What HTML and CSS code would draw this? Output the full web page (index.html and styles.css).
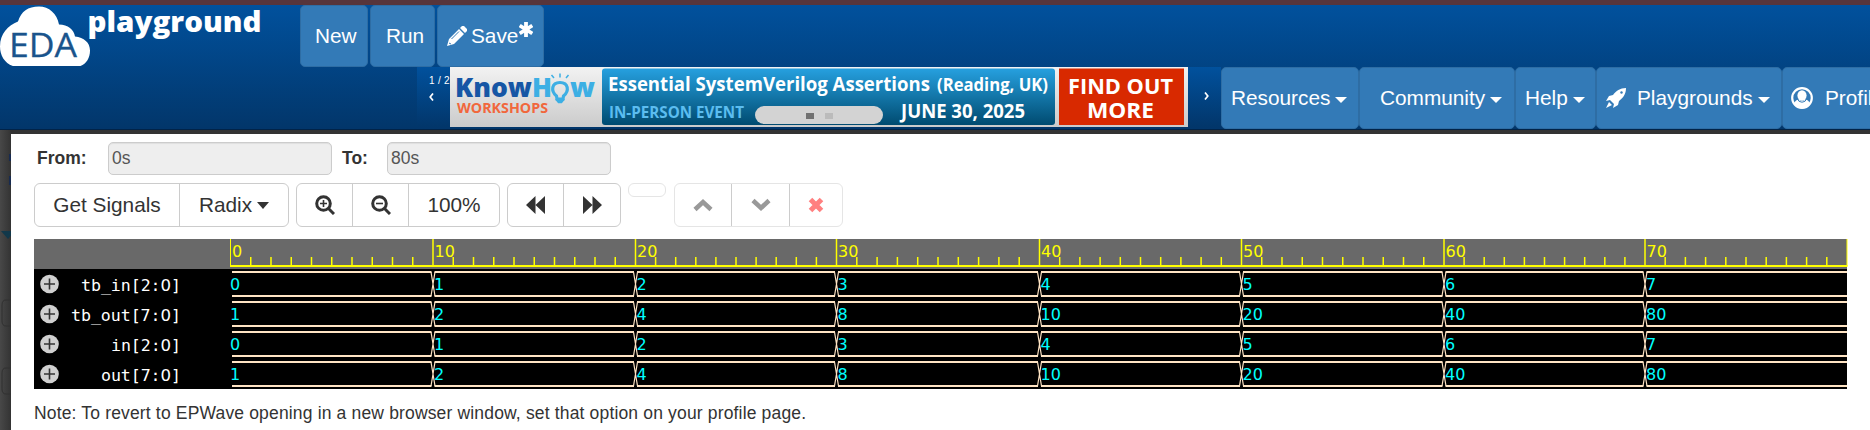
FILE: index.html
```html
<!DOCTYPE html>
<html lang="en">
<head>
<meta charset="utf-8">
<title>EDA Playground</title>
<link rel="stylesheet" href="styles.css">
</head>
<body>
<header class="topbar">
  <div class="primary">
    <svg class="logo" width="270" height="61" viewBox="0 5 270 61">
      <path d="M17 67.500C6 66 0 57 0 47c0-13 8-21 18-25C21 12 28 7 39 7c10 0 18 7 20 18 9 0 15 5 16 12 9 1 15 6 15 14 0 9-5 15-13 16.500z" transform="translate(0 -.500)" fill="#fff"/>
      <text class="logo-eda" x="9" y="57" textLength="68" lengthAdjust="spacingAndGlyphs">EDA</text>
      <text class="logo-name" x="87.500" y="31.500" textLength="174" lengthAdjust="spacingAndGlyphs">playground</text>
    </svg>
    <a class="nav new">New</a>
    <a class="nav run">Run</a>
    <a class="nav save"><svg width="20" height="20" viewBox="0 0 20 20"><path d="M0 20l2-7L12 3l5 5L7 18zM13 2l2-2q1-1 2 0l3 3q1 1 0 2l-2 2z" fill="#fff"/><path d="M4.500 13L12 5.500M2 17l2 1" stroke="#337ab7" fill="none"/></svg><span>Save</span><svg class="star" width="14" height="15" viewBox="0 0 14 15"><path d="M7 0v15M.7 3.500l12.600 8M.7 11.500l12.600-8" stroke="#fff" stroke-width="3.800"/></svg></a>
  </div>
  <div class="secondary">
    <div class="slider">
      <div class="prev"><span>1 / 2</span><svg width="5" height="8" viewBox="0 0 5 8"><path d="M4 .5L1.200 4 4 7.500" stroke="#fff" stroke-width="1.700" fill="none"/></svg></div>
      <svg class="banner" width="738" height="60" viewBox="450 67 738 60">
        <defs>
          <linearGradient id="paper" x2="0" y2="1"><stop stop-color="#f2f2f2"/><stop offset="1" stop-color="#cbcbcb"/></linearGradient>
          <linearGradient id="ocean" x2="0" y2="1"><stop stop-color="#26a0df"/><stop offset="1" stop-color="#004b70"/></linearGradient>
        </defs>
        <path d="M450 67h738v60H450z" fill="url(#paper)"/>
        <rect x="602" y="68.500" width="453" height="56.500" rx="3" fill="url(#ocean)"/>
        <path d="M1059 68.500h125V125h-125z" fill="#d82900"/>
        <text class="b-know" x="455" y="97" fill="#1656a5" textLength="77" lengthAdjust="spacingAndGlyphs">Know</text>
        <text class="b-know" x="532" y="97" fill="#3dafe4" textLength="20" lengthAdjust="spacingAndGlyphs">H</text>
        <text class="b-know" x="570" y="97" fill="#3dafe4" textLength="25" lengthAdjust="spacingAndGlyphs">w</text>
        <path d="M556.500 96c-6-5-5-13.500 3.500-13.500s9.500 8.500 3.500 13.500l-.500 3h-6z" fill="none" stroke="#3dafe4" stroke-width="3.200"/>
        <path d="M556.500 100h7l-2 2.500h-3zM560 73.500v4M551.500 75l2.500 3M568.500 75l-2.500 3" fill="#3dafe4" stroke="#3dafe4" stroke-width="1.500"/>
        <text class="b-work" x="457" y="113" textLength="91" lengthAdjust="spacingAndGlyphs">WORKSHOPS</text>
        <g class="b-text">
          <text x="608" y="91" font-size="20" textLength="322" lengthAdjust="spacingAndGlyphs">Essential SystemVerilog Assertions</text>
          <text x="937" y="91" font-size="17" textLength="111" lengthAdjust="spacingAndGlyphs">(Reading, UK)</text>
          <text class="b-person" x="609" y="117.500" font-size="16.500" textLength="135" lengthAdjust="spacingAndGlyphs">IN-PERSON EVENT</text>
          <text x="901" y="117.500" font-size="19" textLength="124" lengthAdjust="spacingAndGlyphs">JUNE 30, 2025</text>
          <text x="1068" y="93.500" font-size="21" textLength="105" lengthAdjust="spacingAndGlyphs">FIND OUT</text>
          <text x="1087" y="118" font-size="21" textLength="67" lengthAdjust="spacingAndGlyphs">MORE</text>
        </g>
        <rect x="755" y="106" width="128" height="18" rx="9" fill="#d3d3d3"/>
        <path d="M806 113h8v6h-8z" fill="#717171"/><path d="M825 113h8v6h-8z" fill="#bbb"/>
      </svg>
      <svg class="next" width="5" height="8" viewBox="0 0 5 8"><path d="M1 .5L3.800 4 1 7.500" stroke="#fff" stroke-width="1.700" fill="none"/></svg>
    </div>
    <a class="nav menu resources">Resources<i class="caret"></i></a>
    <a class="nav menu community">Community<i class="caret"></i></a>
    <a class="nav menu help">Help<i class="caret"></i></a>
    <a class="nav menu playgrounds"><svg width="20" height="20" viewBox="0 0 20 20"><path d="M20 0c-6 0-10 3-13 7L3 8l-3 5 4-1 4 4-1 4 5-3 1-4c4-3 7-7 7-13zM3 14l-3 6 6-3z" fill="#fff"/><circle cx="15.500" cy="4.500" r="1.200" fill="#337ab7"/></svg><span>Playgrounds</span><i class="caret"></i></a>
    <a class="nav menu profile"><svg width="22" height="22" viewBox="0 0 22 22"><circle cx="11" cy="11" r="9.800" fill="none" stroke="#fff" stroke-width="2.200"/><ellipse cx="11" cy="8.500" rx="4.600" ry="5.200" fill="#fff"/><path d="M3 17q1-4 4.500-4.500 3.500 3 7 0Q18 13 19 17q-3 4.500-8 4.500T3 17z" fill="#fff"/><path d="M6.500 12q1 3.200 4.500 3.200t4.500-3.200" fill="none" stroke="#337ab7" stroke-width="1"/></svg><span>Profile</span></a>
  </div>
</header>
<div class="stage">
  <svg class="backdrop" width="11" height="301" viewBox="0 129 11 301"><path d="M1 230h14l-7 8z" fill="#12384a"/><path d="M11 299H6q-4 0-4 5v16q0 5 4 5h5M11 367H6q-4 0-4 5v16q0 5 4 5h5" fill="none" stroke="#303030"/><path d="M10 153v7M10 175v9" stroke="#182b50" stroke-width="2"/></svg>
  <main class="modal">
    <div class="range"><label class="from">From:</label><div class="field">0s</div><label class="to">To:</label><div class="field">80s</div></div>
    <div class="tools">
      <div class="group"><button class="get">Get Signals</button><button class="radix">Radix<i class="caret"></i></button></div>
      <div class="group">
        <button class="zin"><svg width="20" height="20" viewBox="0 0 20 20"><circle cx="8.500" cy="8.500" r="6.800"/><path d="M13 13l6 6"/><path class="thin" d="M5 8.500h7M8.500 5v7"/></svg></button>
        <button class="zout"><svg width="20" height="20" viewBox="0 0 20 20"><circle cx="8.500" cy="8.500" r="6.800"/><path d="M13 13l6 6"/><path class="thin" d="M5 8.500h7"/></svg></button>
        <button class="full">100%</button>
      </div>
      <div class="group">
        <button class="back"><svg width="19" height="18" viewBox="0 0 19 18"><path class="solid" d="M0 9l9.500-9v9L19 0v18L9.500 9v9z"/></svg></button>
        <button class="fwd"><svg width="19" height="18" viewBox="0 0 19 18"><path class="solid" d="M19 9L9.500 0v9L0 0v18l9.500-9v9z"/></svg></button>
      </div>
      <div class="empty"></div>
      <div class="group faded">
        <button class="up"><svg width="20" height="14" viewBox="0 0 20 14"><path class="chev" d="M2 11.500L10 4l8 7.500"/></svg></button>
        <button class="down"><svg width="20" height="14" viewBox="0 0 20 14"><path class="chev" d="M2 2.500L10 10l8-7.500"/></svg></button>
        <button class="del"><svg width="16" height="16" viewBox="0 0 16 16"><path class="cross" d="M2.500 2.500l11 11M13.500 2.500l-11 11"/></svg></button>
      </div>
    </div>
    <svg class="waves" width="1814" height="150" viewBox="34 239 1814 150"></svg>
    <p class="note">Note: To revert to EPWave opening in a new browser window, set that option on your profile page.</p>
  </main>
</div>
<script src="waves.js"></script>
</body>
</html>
```
FILE: styles.css
```css
*{box-sizing:border-box}
body{margin:0;width:1870px;height:430px;overflow:hidden;font-family:"Liberation Sans",Arial,sans-serif;color:#333;background:#fff}
.topbar{height:130px;border-top:5px solid #57353b;border-bottom:1px solid #012348;background:linear-gradient(#01519d,#02366a)}
.primary,.secondary{display:flex;height:62px}
.logo{margin-right:30px;flex:none}
.logo-eda{font:33px "Open Sans",sans-serif;fill:#1a548c;stroke:#1a548c;stroke-width:.3px}
.logo-name{font:800 29px "Open Sans",sans-serif;fill:#fff}
.nav{display:flex;align-items:center;height:62px;flex:none;border:1px solid #2e6da4;border-radius:5px;background:#337ab7;color:#fff;font-size:20.800px;white-space:nowrap}
.new{width:68px;padding-left:14px;margin-right:2px}
.run{width:65px;padding-left:15px;margin-right:2px}
.save{width:107px;padding-left:9px}
.save span{margin-left:4px}
.star{margin:-13px 0 0 1px}
.secondary{padding-left:417px}
.slider{display:flex;width:804px;height:60px;flex:none;background:linear-gradient(#01519d,#02366a)}
.prev{display:flex;flex-direction:column;width:33px;padding:8px 0 0 12px;color:#fff;font-size:10px;letter-spacing:.3px;line-height:12px;white-space:nowrap}
.prev svg{margin-top:6px}
.banner{flex:none}
.b-know{font:800 26px "Open Sans",sans-serif}
.b-work{font:700 15px "Open Sans",sans-serif;fill:#f1673c}
.b-text{font-family:"Open Sans",sans-serif;font-weight:700;fill:#fff}
.b-person{fill:#5bbdf0}
.next{margin:25px 0 0 16px}
.caret{width:0;height:0;margin-left:5px;margin-top:3px;border:6px solid transparent;border-top-color:currentColor;border-bottom:0}
.menu{padding-left:9px}
.resources{width:138px}
.community{width:156px;padding-left:20px}
.help{width:81px}
.playgrounds{width:186px;padding-left:9px}
.playgrounds span{margin-left:11px}
.profile{width:120px;padding-left:8px}
.profile span{margin-left:12px}
.stage{display:flex;height:300px;background:linear-gradient(90deg,#484848,#333 11px)}
.backdrop{flex:none}
.modal{width:1859px;height:296px;margin-top:4px;padding:8px 0 0 23px;background:#fff}
.range{display:flex;height:33px;align-items:center;font-size:17.500px}
.range label{font-weight:bold}
.from{width:74px;padding-left:3px}
.to{width:55px;padding-left:10px}
.field{width:224px;height:33px;padding-left:3px;line-height:30px;border:1px solid #ccc;border-radius:5px;background:#eee;color:#555;box-shadow:inset 0 1px 1px #0001}
.tools{display:flex;align-items:flex-start;gap:7px;margin-top:8px;height:56px}
.group{display:flex;height:44px;border:1px solid #ccc;border-radius:6px}
.group button{display:flex;align-items:center;justify-content:center;padding:0;border:0;background:none;color:#333;font:20.800px "Liberation Sans",Arial,sans-serif}
.group button+button{border-left:1px solid #ccc}
.group svg{fill:none;stroke:#333;stroke-width:3}
.group .thin{stroke-width:1.600}
.group .solid{fill:#333;stroke:none}
.get{width:144px}.radix{width:109px}
.radix .caret{margin-top:0;border-width:7px 6.500px 0}
.zin{width:55px}.zout{width:56px}.full{width:91px}
.back{width:55px}.fwd{width:57px}
.empty{width:38px;height:14px;border:1px solid #e5e5e5;border-radius:6px}
.faded{margin-left:1px;border-color:#e5e5e5}
.up{width:56px}.down{width:58px}.del{width:53px}
.group .chev{stroke:#999;stroke-width:4.500}
.group .cross{stroke:#ff8080;stroke-width:5}
.waves{display:block}
.signal{font:16.600px "DejaVu Sans Mono",monospace;fill:#fff}
.zero{font-family:"DejaVu Sans",sans-serif}
.value{font:16px "DejaVu Sans",sans-serif;fill:#0ff}
.tick{font:16px "DejaVu Sans",sans-serif;fill:#ff0}
.note{margin:14px 0 0;font-size:17.500px;letter-spacing:.16px;line-height:20px}
```
FILE: waves.js
```javascript
const signals = [
  ["tb_in[2:0]", [0, 1, 2, 3, 4, 5, 6, 7]],
  ["tb_out[7:0]", [1, 2, 4, 8, 10, 20, 40, 80]],
  ["in[2:0]", [0, 1, 2, 3, 4, 5, 6, 7]],
  ["out[7:0]", [1, 2, 4, 8, 10, 20, 40, 80]]
];
const majors = [230.5, 433, 635.5, 836.5, 1039.5, 1241.5, 1444, 1645, 1847];
const at = t => {
  const i = Math.min(7, Math.floor(t / 10));
  return majors[i] + (majors[i + 1] - majors[i]) * (t - i * 10) / 10;
};
let out = '<path d="M34 239h1813v30H34z" fill="#696969"/><path d="M34 269h1813v120H34z" fill="#000"/>';
out += '<path d="M230 265h1617.500v2H230z" fill="#ff0"/>';
for (let t = 0; t <= 80; t++) {
  const major = t % 10 === 0;
  const w = t === 0 || t === 80 ? 1 : 1.5;
  out += `<rect x="${at(t) - w / 2}" y="${major ? 239 : 257}" width="${w}" height="${major ? 27 : 9}" fill="#ff0"/>`;
  if (major && t < 80) out += `<text class="tick" x="${at(t) + 1.5}" y="257">${t}</text>`;
}
signals.forEach(([name, values], row) => {
  const y = 269 + row * 30;
  out += `<circle cx="49.500" cy="${y + 15}" r="9.300" fill="#d0d0d0"/><path d="M44 ${y + 15}h11M49.500 ${y + 9.5}v11" stroke="#333" stroke-width="1.600"/>`;
  const width = name.length * 10;
  out += `<text class="signal" x="${181 - width}" y="${y + 22}" textLength="${width}">${name.replace("0]", '<tspan class="zero">0</tspan>]')}</text>`;
  values.forEach((value, i) => {
    const a = at(i * 10), b = at(i * 10 + 10);
    const end = i === 7;
    out += `<path d="M${a + 1.5} ${y + 3}H${end ? b : b - 1.5}M${a + 1.5} ${y + 27}H${end ? b : b - 1.5}" stroke="#ffe4c4" stroke-width="2"/>`;
    if (!end) out += `<path d="M${b - 2} ${y + 3}l4 24M${b + 2} ${y + 3}l-4 24" stroke="#ffe4c4" stroke-width="1.200"/>`;
    out += `<text class="value" x="${a + (i ? 1 : -0.5)}" y="${y + 21}">${value}</text>`;
  });
});
document.querySelector(".waves").innerHTML = out;
```
